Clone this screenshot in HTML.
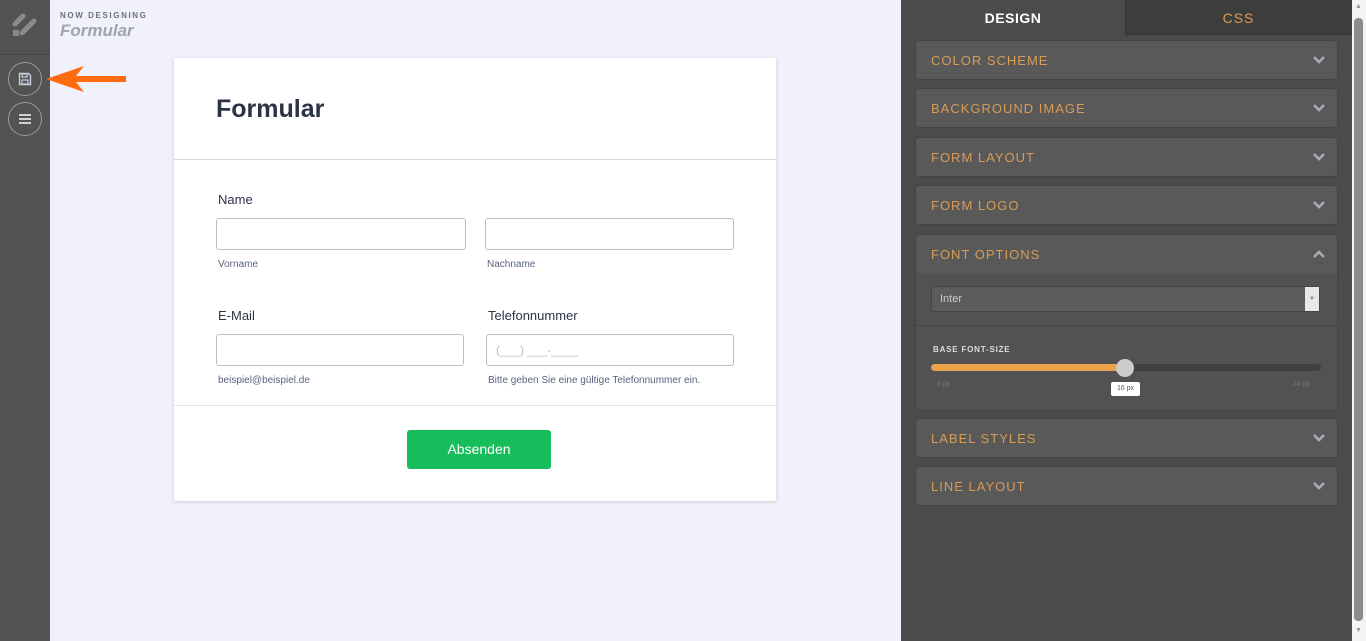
<!DOCTYPE html>
<html><head><meta charset="utf-8"><style>
*{box-sizing:border-box;margin:0;padding:0}
body{width:1366px;height:641px;overflow:hidden;position:relative;background:#f1f1fb;font-family:"Liberation Sans",sans-serif}
.a{position:absolute}
.side{left:0;top:0;width:50px;height:641px;background:#535353}
.circ{width:34px;height:34px;border:1px solid #9a9a9a;border-radius:50%;left:8px}
.card{left:174px;top:58px;width:602px;height:443px;background:#fff;box-shadow:0 1px 4px rgba(0,0,0,.15)}
.lbl{font-size:13px;color:#2c3345}
.sub{font-size:10px;color:#57647e}
.inp{height:32px;border:1px solid #b8bdc9;border-radius:3px;background:#fff}
.panel{left:901px;top:0;width:451px;height:641px;background:#4b4b4b}
.acc{left:916px;width:421px;height:38px;background:#595959;border-radius:3px;box-shadow:0 0 0 1px #444}
.acc span{position:absolute;left:15px;top:12px;font-size:13px;letter-spacing:1px;color:#d89c55}
.chev{position:absolute;right:11px;top:13px;width:14px;height:12px}
</style></head><body>
<div class="a side"></div>
<svg class="a" style="left:12px;top:12px" width="26" height="26" viewBox="0 0 26 26"><g stroke="#8a8a8a" stroke-width="5" stroke-linecap="round"><line x1="3" y1="12" x2="11" y2="4"/><line x1="10" y1="21" x2="22" y2="9"/></g><rect x="1" y="18" width="6" height="6" fill="#8a8a8a"/></svg>
<div class="a" style="left:0;top:54px;width:50px;height:1px;background:#474747"></div>
<div class="a circ" style="top:62px"></div>
<svg class="a" style="left:18px;top:72px" width="14" height="14" viewBox="0 0 14 14"><path d="M1.5 1.5h9l2 2v9h-11z" fill="none" stroke="#c8d0e0" stroke-width="1.4"/><rect x="4" y="2" width="5" height="3" fill="none" stroke="#c8d0e0" stroke-width="1.2"/><rect x="4" y="8" width="6" height="4" fill="none" stroke="#c8d0e0" stroke-width="1.2"/></svg>
<div class="a circ" style="top:102px"></div>
<svg class="a" style="left:18px;top:112px" width="14" height="14"><g stroke="#d0d0d0" stroke-width="2"><line x1="1" y1="3" x2="13" y2="3"/><line x1="1" y1="7" x2="13" y2="7"/><line x1="1" y1="11" x2="13" y2="11"/></g></svg>
<svg class="a" style="left:44px;top:64px" width="86" height="30"><polygon points="2,15 40,2 32,12 82,12 82,18 32,18 40,28" fill="#ff6b0f"/></svg>
<div class="a" style="left:60px;top:11px;font-size:8px;letter-spacing:1.6px;font-weight:bold;color:#6b7080">NOW DESIGNING</div>
<div class="a" style="left:60px;top:21px;font-size:17px;font-weight:bold;font-style:italic;color:#9ea3b0">Formular</div>

<div class="a card">
<div class="a" style="left:42px;top:37px;font-size:25px;font-weight:bold;color:#2c3345">Formular</div>
<div class="a" style="left:0;top:101px;width:602px;height:1px;background:#d8dae3"></div>
<div class="a lbl" style="left:44px;top:134px">Name</div>
<div class="a inp" style="left:42px;top:160px;width:250px"></div>
<div class="a inp" style="left:311px;top:160px;width:249px"></div>
<div class="a sub" style="left:44px;top:201px">Vorname</div>
<div class="a sub" style="left:313px;top:201px">Nachname</div>
<div class="a lbl" style="left:44px;top:250px">E-Mail</div>
<div class="a lbl" style="left:314px;top:250px">Telefonnummer</div>
<div class="a inp" style="left:42px;top:276px;width:248px"></div>
<div class="a inp" style="left:312px;top:276px;width:248px"><span style="position:absolute;left:9px;top:8px;font-size:12px;color:#b8bdc9">(___) ___-____</span></div>
<div class="a sub" style="left:44px;top:317px">beispiel@beispiel.de</div>
<div class="a sub" style="left:314px;top:317px">Bitte geben Sie eine gültige Telefonnummer ein.</div>
<div class="a" style="left:0;top:347px;width:602px;height:1px;background:#e3e4ea"></div>
<div class="a" style="left:233px;top:372px;width:144px;height:39px;background:#18bd5b;border-radius:3px;color:#fff;font-size:14px;text-align:center;line-height:39px">Absenden</div>
</div>

<div class="a panel"></div>
<div class="a" style="left:1125px;top:0;width:227px;height:35px;background:#3d3d3d;border-left:1px solid #333;border-bottom:1px solid #333"></div>
<div class="a" style="left:901px;top:10px;width:224px;text-align:center;font-size:14px;font-weight:bold;letter-spacing:.5px;color:#fff">DESIGN</div>
<div class="a" style="left:1125px;top:10px;width:227px;text-align:center;font-size:14px;letter-spacing:1px;color:#e09a4a">CSS</div>

<div class="a acc" style="top:41px"><span>COLOR SCHEME</span><svg class="chev" viewBox="0 0 14 12"><path d="M2 3l5 5 5-5" stroke="#a8aab4" stroke-width="2.6" fill="none"/></svg></div>
<div class="a acc" style="top:89px"><span>BACKGROUND IMAGE</span><svg class="chev" viewBox="0 0 14 12"><path d="M2 3l5 5 5-5" stroke="#a8aab4" stroke-width="2.6" fill="none"/></svg></div>
<div class="a acc" style="top:138px"><span>FORM LAYOUT</span><svg class="chev" viewBox="0 0 14 12"><path d="M2 3l5 5 5-5" stroke="#a8aab4" stroke-width="2.6" fill="none"/></svg></div>
<div class="a acc" style="top:186px"><span>FORM LOGO</span><svg class="chev" viewBox="0 0 14 12"><path d="M2 3l5 5 5-5" stroke="#a8aab4" stroke-width="2.6" fill="none"/></svg></div>
<div class="a acc" style="top:235px;height:175px;background:#525252"><div class="a" style="left:0;top:0;width:421px;height:38px;background:#595959;border-radius:3px 3px 0 0"></div><span>FONT OPTIONS</span><svg class="chev" viewBox="0 0 14 12"><path d="M2 9l5-5 5 5" stroke="#a8aab4" stroke-width="2.6" fill="none"/></svg>
<div class="a" style="left:15px;top:51px;width:389px;height:26px;background:#5c5c5c;border:1px solid #444;border-radius:3px"><span style="position:absolute;left:8px;top:6px;font-size:11px;color:#ccc;letter-spacing:0">Inter</span><div class="a" style="right:0;top:0;width:14px;height:24px;background:#e8e8e8;font-size:6px;color:#888;text-align:center;line-height:24px">▼</div></div>
<div class="a" style="left:0;top:90px;width:421px;height:1px;background:#444"></div>
<div class="a" style="left:17px;top:110px;font-size:8px;font-weight:bold;letter-spacing:.8px;color:#ddd">BASE FONT-SIZE</div>
<div class="a" style="left:15px;top:129px;width:390px;height:7px;background:#3f3f3f;border-radius:4px"></div>
<div class="a" style="left:15px;top:129px;width:194px;height:7px;background:#e9a24a;border-radius:4px"></div>
<div class="a" style="left:200px;top:124px;width:18px;height:18px;background:#ccc;border-radius:50%"></div>
<div class="a" style="left:21px;top:146px;font-size:7px;color:#777">8 px</div>
<div class="a" style="left:377px;top:146px;font-size:7px;color:#777">24 px</div>
<div class="a" style="left:195px;top:147px;width:29px;height:14px;background:#fff;border-radius:2px;font-size:7px;color:#555;text-align:center;line-height:14px">16 px</div>
</div>
<div class="a acc" style="top:419px"><span>LABEL STYLES</span><svg class="chev" viewBox="0 0 14 12"><path d="M2 3l5 5 5-5" stroke="#a8aab4" stroke-width="2.6" fill="none"/></svg></div>
<div class="a acc" style="top:467px"><span>LINE LAYOUT</span><svg class="chev" viewBox="0 0 14 12"><path d="M2 3l5 5 5-5" stroke="#a8aab4" stroke-width="2.6" fill="none"/></svg></div>

<div class="a" style="left:1352px;top:0;width:14px;height:641px;background:#f4f4f4"></div>
<div class="a" style="left:1354px;top:18px;width:9px;height:603px;background:#8c8c8c;border-radius:4px"></div>
<div class="a" style="left:1355px;top:3px;font-size:7px;color:#999">▲</div>
<div class="a" style="left:1355px;top:627px;font-size:7px;color:#999">▼</div>
</body></html>
